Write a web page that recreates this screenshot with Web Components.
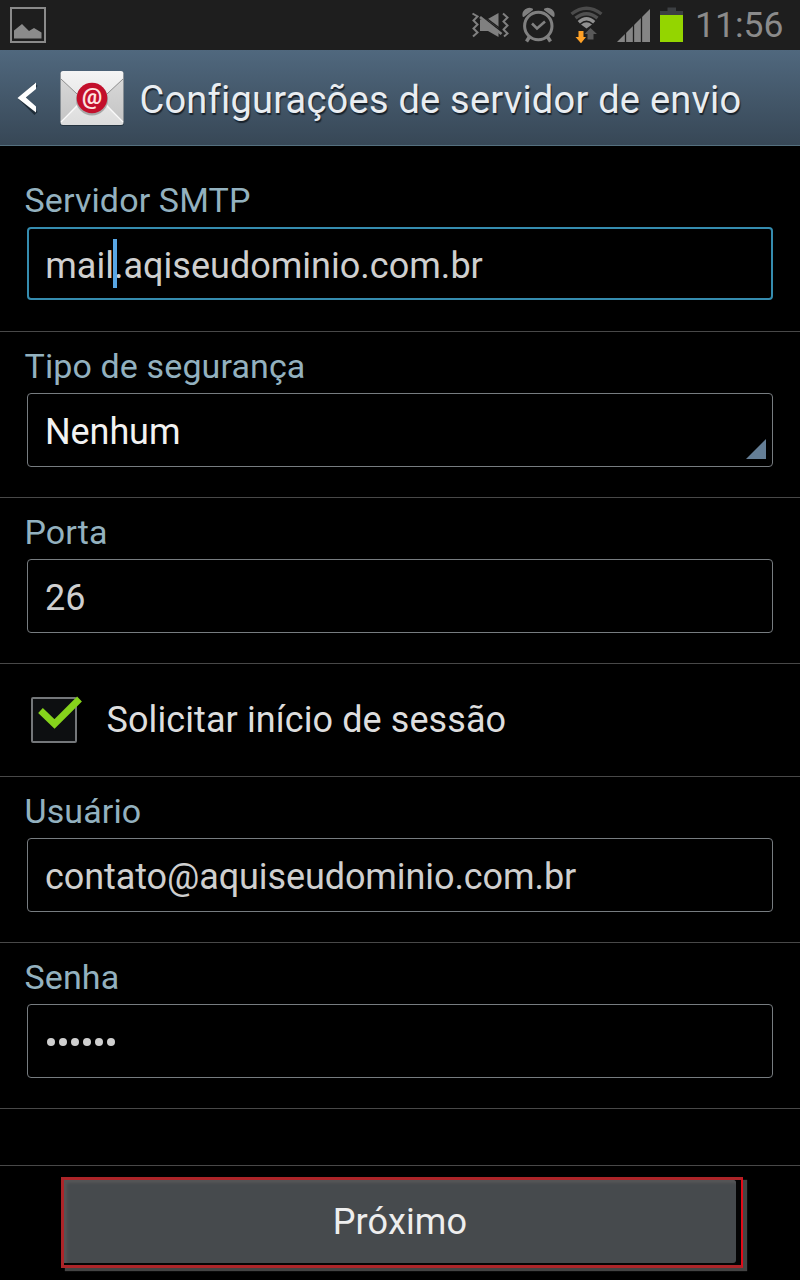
<!DOCTYPE html>
<html lang="pt-BR">
<head>
<meta charset="utf-8">
<title>Configurações de servidor de envio</title>
<style>
html,body{margin:0;background:#000}
body{width:800px;height:1280px;overflow:hidden;font-family:Roboto,"Noto Sans",sans-serif}
</style>
</head>
<body>
<server-settings></server-settings>
<script>
const define = (name, html, init) => customElements.define(name, class extends HTMLElement {
  constructor() {
    super();
    this.attachShadow({ mode: 'open' }).innerHTML = html;
  }
  connectedCallback() { if (init) init(this); }
});

define('status-bar', `
<style>
:host{display:flex;height:50px;background:#1e1e1e;color:#8b8b8b}
svg{display:block;flex:none}
.gap{flex:1}
time{width:105px;font-size:35.5px;line-height:50px;white-space:nowrap;letter-spacing:0}
</style>
<svg width="60" height="50"><rect x="11" y="8" width="34" height="34" fill="none" stroke="#8b8b8b" stroke-width="2"/><path d="M14 38.500V30.500L22 24L29 31L34 28L41.500 32.500V38.500Z" fill="#8b8b8b"/></svg>
<span class="gap"></span>
<svg width="235" height="50" viewBox="460 0 235 50">
  <g fill="none" stroke="#808080" stroke-width="2">
    <path d="M472.500 13.500L477.500 16.500L473.500 20.500L477.500 24.500L473.500 28.500L477.500 32.500L473 36.500M503 13.500L507.500 17.500L503.500 21.500L507.500 25.500L503.500 29.500L507.500 33.500L504 36.500"/>
  </g>
  <path d="M480 19.500H487L498.500 13V37L488 31H480Z" fill="#808080"/>
  <path d="M480 15.500L502 32" stroke="#1e1e1e" stroke-width="1.800"/><path d="M480 13.500L502 30" stroke="#1e1e1e" stroke-width="1.500"/><path d="M480 17L501.500 34" stroke="#808080" stroke-width="2.800"/>
  <g fill="none" stroke="#808080"><circle cx="538.300" cy="26" r="13.700" stroke-width="3"/><path d="M532 23.500L537 28.500L545 21.500" stroke-width="2.600"/><path d="M530 36L526.500 41.500M547 36L550.500 41.500" stroke-width="3.500"/></g>
  <path d="M523.500 16A6 6 0 0 1 532 9.500ZM553.500 16A6 6 0 0 0 545 9.500Z" fill="#808080" stroke="#808080" stroke-width="2" stroke-linejoin="round"/>
  <g fill="none" stroke-width="3.400"><path d="M571.500 14Q586.500 2.500 601.500 14" stroke="#4b4b4b"/><path d="M575.500 18.200Q586.500 9.500 597.500 18.200" stroke="#505050"/><path d="M578.800 22.200Q586.500 15.500 594.200 22.200" stroke="#909090"/></g>
  <path d="M581 24.500Q586.500 20 592 24.500L586.500 28.500Z" fill="#909090"/>
  <path d="M578.500 31H583.500V37H586L581 43.200L575.500 37H578.500Z" fill="#ffa126"/>
  <path d="M587.500 39.500V34H584.500L590.500 28L597 34H593.500V39.500Z" fill="#595959"/>
  <path d="M617 42L650 9V42Z" fill="#858585"/>
  <path d="M625.500 30V42M633.500 22V42M641.500 14V42" stroke="#1e1e1e" stroke-width="1.300"/>
  <path d="M667.500 7.500H676V11H683V15H660V11H667.500Z" fill="#3c3f42"/><rect x="660" y="15" width="23" height="27" fill="#94d500"/>
</svg>
<time>11:56</time>
`);

define('title-bar', `
<style>
:host{display:flex;box-sizing:border-box;height:96px;background:linear-gradient(#50687e,#374756);border-bottom:1px solid #55707f;color:#e9edf1}
svg{display:block;flex:none}
text{font:700 22.500px Roboto,sans-serif}
h1{margin:0 0 0 9.500px;font-size:38px;font-weight:400;line-height:100px;height:95px;white-space:nowrap;text-shadow:1px 1.500px 1px #18222c;letter-spacing:.23px}
</style>
<svg width="130" height="95" viewBox="0 50 130 95">
  <defs>
    <linearGradient id="p" x2="0" y2="1"><stop stop-color="#f4f4f4"/><stop offset="1" stop-color="#dcdcdc"/></linearGradient>
    <linearGradient id="s" x2="0" y2="1"><stop stop-color="#d8d8d8"/><stop offset="1" stop-color="#c4c4c4"/></linearGradient>
  </defs>
  <path d="M36 84.500L21.500 99L36 113.500" fill="none" stroke="#1f2d39" stroke-width="4.500"/>
  <path d="M36 82.500V89L25.800 97.500L36 106.500V112.500L17.500 98Z" fill="#fff"/>
  <rect x="60" y="71.500" width="64" height="54.500" rx="3" fill="#263440"/>
  <rect x="60.500" y="71" width="63" height="54" rx="2.500" fill="url(#p)"/>
  <path d="M61 79L82 99L61 122ZM123 79L102 99L123 122Z" fill="url(#s)"/>
  <path d="M61 79L92 108L123 79" fill="none" stroke="#8d8d8d" stroke-width="1"/>
  <path d="M61 122L84 99M123 122L100 99" stroke="#fafafa" stroke-width="1.200"/>
  <circle cx="92" cy="99.500" r="16" fill="#8e8e8e" opacity=".7"/>
  <circle cx="92" cy="98" r="15.300" fill="#c30f2b"/>
  <text x="92" y="104" text-anchor="middle" fill="#ffe4e0">@</text>
</svg>
<h1><slot></slot></h1>
`);

define('form-field', `
<style>
:host{display:flex;flex-direction:column;box-sizing:border-box;height:166px;padding:0 27px;border-bottom:1px solid #484848}
:host([first]){height:186px;padding-top:20px}
label{height:61px;margin-left:-2.500px;font-size:34px;line-height:69px;color:#93b1bf;white-space:nowrap;letter-spacing:.12px}
.box{box-sizing:border-box;height:74px;border:1px solid #777c80;border-radius:4px;padding-left:17px;font-size:36px;line-height:77px;color:#cfcfcf;white-space:nowrap;letter-spacing:-.09px;display:flex}
:host([first]) .box{height:73px;border:2px solid #358caf;padding-left:16.200px;line-height:73px;letter-spacing:.02px}
:host([select]) .box{color:#f2f2f2}
.arrow{display:none;margin:45px 6px 0 auto;width:20px;height:20px;background:#647e96;clip-path:polygon(100% 0,100% 100%,0 100%)}
:host([select]) .arrow{display:block}
</style>
<label></label>
<div class="box"><slot></slot><i class="arrow"></i></div>
`, el => { el.shadowRoot.querySelector('label').textContent = el.getAttribute('label'); });

define('text-caret', `
<style>:host{display:inline-block;width:0;height:49px;position:relative}
i{position:absolute;left:-1px;top:9.500px;width:4px;height:49px;background:#58a6e4}</style><i></i>
`);

define('password-dots', `
<style>:host{display:flex;align-items:center;height:73px;padding-left:2px}
svg{display:block}</style>
<svg width="72" height="10" fill="#cfcfcf"><circle cx="4" cy="5" r="4"/><circle cx="16" cy="5" r="4"/><circle cx="28" cy="5" r="4"/><circle cx="40" cy="5" r="4"/><circle cx="52" cy="5" r="4"/><circle cx="64" cy="5" r="4"/></svg>
`);

define('check-row', `
<style>
:host{display:flex;box-sizing:border-box;height:113px;border-bottom:1px solid #484848;padding-left:25px;font-size:36px;line-height:112px;color:#dedede;white-space:nowrap;letter-spacing:.09px}
svg{display:block;width:81.500px;height:112px}
</style>
<svg viewBox="25 664 81.5 112"><rect x="32" y="698" width="44" height="44" rx="1" fill="#0d0f11" stroke="#74777a" stroke-width="2"/><path d="M40.500 710.500L54.500 724L79.500 699" fill="none" stroke="#86d31c" stroke-width="6.800"/></svg>
<span><slot></slot></span>
`);

define('next-bar', `
<style>
:host{display:block;box-sizing:border-box;height:115px;border-top:1px solid #484848;padding:11px 0 0 61px}
.mark{box-sizing:border-box;width:681.500px;height:91px;border:3px solid #ad2529;border-right:2.500px solid #e30b19;box-shadow:4px 3px 1px #444;background:#050505}
button{display:block;box-sizing:border-box;width:672px;height:83px;margin:0;padding:2px 0 0;border:0;border-radius:0 3px 3px 0;background:#464a4d;box-shadow:inset 4px 4px 3px -1px #565657;color:#eee;font:400 36px/81px Roboto,sans-serif;letter-spacing:.15px}
</style>
<div class="mark"><button type="button"><slot></slot></button></div>
`);

define('server-settings', `
<style>
:host{display:flex;flex-direction:column;width:800px;height:1280px;background:#000}
.space{flex:1}
</style>
<status-bar></status-bar>
<title-bar>Configurações de servidor de envio</title-bar>
<form-field first label="Servidor SMTP"><span>mail<text-caret></text-caret>.aqiseudominio.com.br</span></form-field>
<form-field select label="Tipo de segurança">Nenhum</form-field>
<form-field label="Porta">26</form-field>
<check-row>Solicitar início de sessão</check-row>
<form-field label="Usuário">contato@aquiseudominio.com.br</form-field>
<form-field label="Senha"><password-dots></password-dots></form-field>
<div class="space"></div>
<next-bar>Próximo</next-bar>
`);
</script>
</body>
</html>
